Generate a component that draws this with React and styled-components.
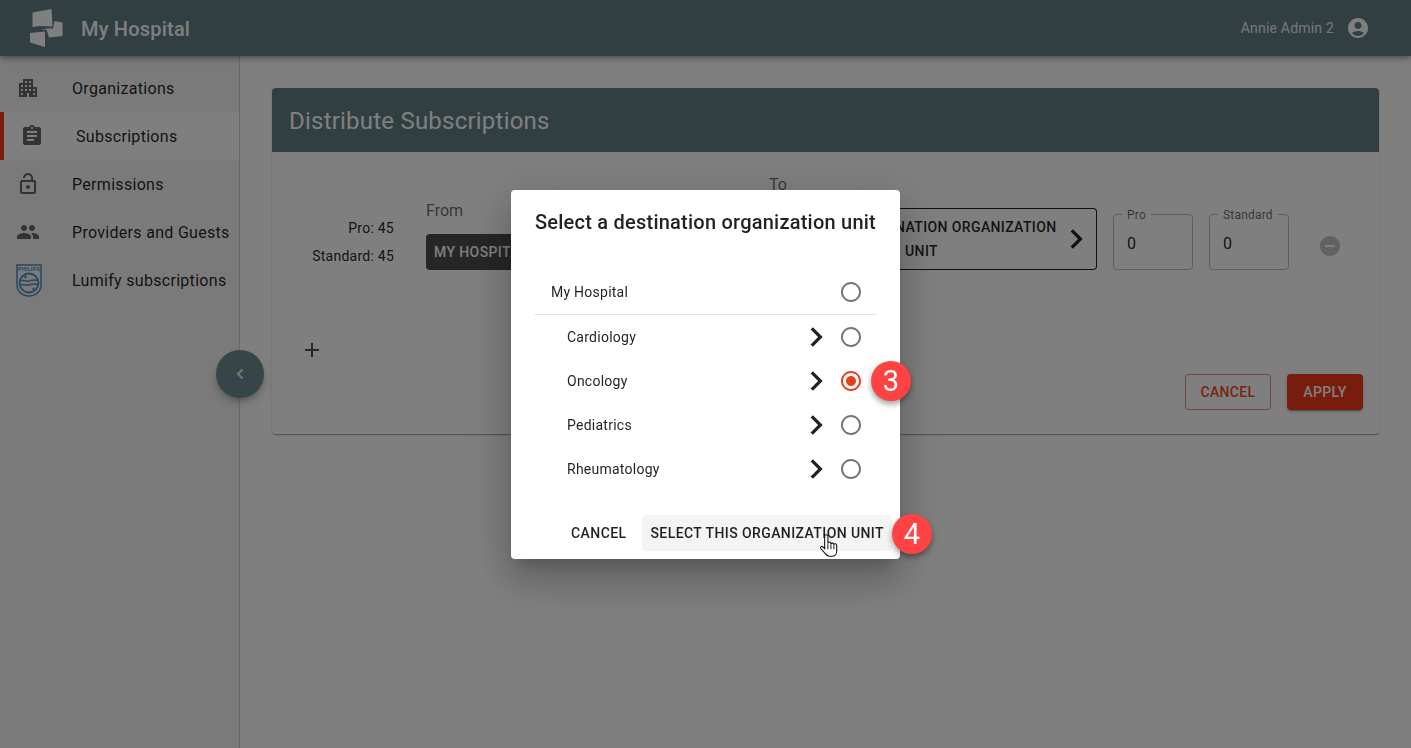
import React from 'react';
import styled, { createGlobalStyle } from 'styled-components';
import {
  MdApartment, MdAssignment, MdLockOpen, MdPeople, MdAccountCircle,
  MdRemoveCircle, MdAdd, MdRadioButtonChecked, MdRadioButtonUnchecked,
} from 'react-icons/md';

const Global = createGlobalStyle`
  html, body { margin: 0; padding: 0; height: 100%; background: #fff; }
  body { font-family: Roboto, "Liberation Sans", sans-serif; color: rgba(0,0,0,.87); overflow: hidden; }
  #root { height: 100%; }
  * { box-sizing: border-box; }
`;

const Page = styled.div`
  height: 748px;
  display: flex;
  flex-direction: column;
`;
const Header = styled.header`
  height: 56px;
  flex: none;
  background: #637d85;
  color: #fff;
  display: flex;
  align-items: center;
  padding: 0 41px 0 30px;
  box-shadow: 0 2px 4px -1px rgba(0,0,0,.2), 0 4px 5px 0 rgba(0,0,0,.14), 0 1px 10px 0 rgba(0,0,0,.12);
  position: relative;
  z-index: 2;
`;
const BrandName = styled.div`
  font-size: 20px;
  font-weight: 500;
  letter-spacing: .2px;
  margin-left: 15px;
  padding-top: 2px;
  flex: 1;
`;
const UserName = styled.div`
  font-size: 14px;
  letter-spacing: .2px;
  margin-right: 12px;
  color: rgba(255,255,255,.9);
`;
const Body = styled.div`
  flex: 1;
  display: flex;
  min-height: 0;
`;
const Sidebar = styled.nav`
  width: 240px;
  flex: none;
  background: #f5f5f5;
  border-right: 1px solid #d0d0d0;
  padding-top: 8px;
  position: relative;
`;
const NavItem = styled.div`
  height: 48px;
  display: flex;
  align-items: center;
  padding-left: 16px;
  font-size: 16px;
  letter-spacing: .3px;
  color: rgba(0,0,0,.87);
  background: ${p => (p.$active ? '#ffffff' : 'transparent')};
  border-left: ${p => (p.$active ? '4px solid #f0391a' : 'none')};
  white-space: nowrap;
`;
const NavIcon = styled.span`
  width: 56px;
  flex: none;
  display: flex;
  align-items: center;
  color: #666;
  font-size: 24px;
`;
const Collapse = styled.button`
  position: absolute;
  right: -25px;
  top: 294px;
  width: 48px;
  height: 48px;
  border-radius: 50%;
  border: 0;
  padding: 0;
  background: #6a8a90;
  display: flex;
  align-items: center;
  justify-content: center;
  box-shadow: 0 3px 5px -1px rgba(0,0,0,.2), 0 6px 10px 0 rgba(0,0,0,.14);
`;
const Main = styled.main`
  flex: 1;
  padding: 32px 32px 0;
  min-width: 0;
`;
const Card = styled.section`
  height: 346px;
  background: #fff;
  border-radius: 4px;
  box-shadow: 0 2px 1px -1px rgba(0,0,0,.2), 0 1px 1px 0 rgba(0,0,0,.14), 0 1px 3px 0 rgba(0,0,0,.12);
  display: flex;
  flex-direction: column;
  overflow: hidden;
`;
const CardHeader = styled.h2`
  margin: 0;
  height: 64px;
  flex: none;
  background: #637d85;
  color: #fff;
  font-size: 24px;
  font-weight: 400;
  letter-spacing: .22px;
  display: flex;
  align-items: center;
  padding: 2px 0 0 17px;
`;
const CardBody = styled.div`
  flex: 1;
  padding: 20px 16px 24px;
  display: flex;
  flex-direction: column;
`;
const TransferRow = styled.div`
  display: flex;
  align-items: flex-end;
  height: 98px;
`;
const Stats = styled.div`
  width: 106px;
  margin-right: 32px;
  text-align: right;
  font-size: 14px;
  letter-spacing: .25px;
  line-height: 28px;
`;
const Column = styled.div`
  display: flex;
  flex-direction: column;
  margin-right: ${p => p.$gap || 0}px;
`;
const ColumnLabel = styled.div`
  font-size: 16px;
  line-height: 24px;
  margin-bottom: 11px;
  color: rgba(0,0,0,.6);
`;
const FromButton = styled.button`
  width: 311px;
  height: 36px;
  border: 0;
  border-radius: 4px;
  background: #4c4c4c;
  color: #fff;
  font: 500 14px Roboto, sans-serif;
  letter-spacing: .4px;
  text-align: left;
  padding: 0 8px;
`;
const DestButton = styled.button`
  width: 328px;
  height: 62px;
  border: 1px solid rgba(0,0,0,.87);
  border-radius: 4px;
  background: #fff;
  color: rgba(0,0,0,.87);
  font: 500 14px/24px Roboto, sans-serif;
  letter-spacing: .38px;
  display: flex;
  align-items: center;
  padding: 0 13px 0 15px;
  gap: 12px;
`;
const DestText = styled.span`
  flex: 1;
  text-align: center;
`;
const Field = styled.div`
  position: relative;
  width: 80px;
  height: 56px;
  margin-left: 16px;
  border: 1px solid #bdbdbd;
  border-radius: 4px;
  font-size: 16px;
  padding: 17px 13px;
  line-height: 24px;
  color: rgba(0,0,0,.87);
`;
const FieldLabel = styled.span`
  position: absolute;
  left: 8px;
  top: -7px;
  background: #fff;
  padding: 0 5px;
  font-size: 12px;
  line-height: 14px;
  letter-spacing: .2px;
  color: rgba(0,0,0,.6);
`;
const RemoveIcon = styled.span`
  font-size: 24px;
  line-height: 0;
  color: #c4c4c4;
  margin-left: 29px;
  margin-bottom: 12px;
`;
const AddRow = styled.div`
  font-size: 24px;
  line-height: 0;
  margin: 68px 0 0 12px;
  color: rgba(0,0,0,.7);
`;
const CardActions = styled.div`
  display: flex;
  justify-content: flex-end;
  gap: 16px;
  margin-top: auto;
`;
const OutlineBtn = styled.button`
  width: 86px;
  height: 36px;
  border: 1px solid #f08a78;
  border-radius: 4px;
  background: #fff;
  color: #f04a2e;
  font: 500 14px Roboto, sans-serif;
  letter-spacing: .35px;
`;
const SolidBtn = styled.button`
  width: 76px;
  height: 36px;
  border: 0;
  border-radius: 4px;
  background: #f0391a;
  color: #fff;
  font: 500 14px Roboto, sans-serif;
  letter-spacing: .4px;
  box-shadow: 0 3px 1px -2px rgba(0,0,0,.2), 0 2px 2px 0 rgba(0,0,0,.14), 0 1px 5px 0 rgba(0,0,0,.12);
`;
const Overlay = styled.div`
  position: fixed;
  inset: 0;
  background: rgba(0,0,0,.5);
  z-index: 10;
  display: flex;
  align-items: center;
  justify-content: center;
`;
const Dialog = styled.div`
  position: relative;
  width: 389px;
  height: 369px;
  margin-top: 1px;
  background: #fff;
  border-radius: 4px;
  box-shadow: 0 11px 15px -7px rgba(0,0,0,.2), 0 24px 38px 3px rgba(0,0,0,.14), 0 9px 46px 8px rgba(0,0,0,.12);
  display: flex;
  flex-direction: column;
`;
const DialogTitle = styled.h3`
  margin: 0;
  padding: 16px 24px;
  font-size: 20px;
  line-height: 32px;
  font-weight: 500;
  letter-spacing: .23px;
  color: rgba(0,0,0,.87);
  white-space: nowrap;
`;
const UnitList = styled.div`
  padding: 16px 24px 0;
`;
const UnitRow = styled.div`
  height: ${p => (p.$root ? 45 : 44)}px;
  display: flex;
  align-items: center;
  padding-left: ${p => (p.$root ? 16 : 32)}px;
  padding-right: 13px;
  font-size: 14px;
  letter-spacing: .25px;
  border-bottom: ${p => (p.$root ? '1px solid #e0e0e0' : 'none')};
`;
const UnitName = styled.span`
  flex: 1;
`;
const UnitChevron = styled.span`
  display: flex;
  margin-right: 16px;
`;
const Radio = styled.span`
  font-size: 24px;
  line-height: 0;
  color: ${p => (p.$on ? '#e8401c' : '#757575')};
`;
const DialogActions = styled.div`
  margin-top: auto;
  padding: 8px;
  display: flex;
  justify-content: flex-end;
  gap: 8px;
`;
const TextBtn = styled.button`
  height: 36px;
  border: 0;
  border-radius: 4px;
  padding: 0 8px;
  background: ${p => (p.$hover ? '#f4f4f4' : 'transparent')};
  color: rgba(0,0,0,.87);
  font: 500 14px Roboto, sans-serif;
  letter-spacing: .41px;
  white-space: nowrap;
`;
const Badge = styled.span`
  position: absolute;
  left: ${p => p.$x}px;
  top: ${p => p.$y}px;
  width: 40px;
  height: 40px;
  border-radius: 50%;
  background: #ff4242;
  color: #fff;
  font-size: 29px;
  display: flex;
  align-items: center;
  justify-content: center;
  box-shadow: 0 3px 6px rgba(0,0,0,.4);
`;
const Pointer = styled.svg`
  position: absolute;
  left: 308px;
  top: 344px;
`;

const Chevron = () => (
  <svg width="13" height="20" viewBox="8.2 6 8 12" aria-hidden="true">
    <path fill="#212121" d="M10 6 8.59 7.41 13.17 12l-4.58 4.59L10 18l6-6z" />
  </svg>
);

const Logo = () => (
  <svg width="36" height="40" viewBox="31 8 36 40" fill="#fff" aria-hidden="true">
    <polygon points="33.5,12.5 52.5,9 53.5,26.5 41,26 33.5,27" />
    <polygon points="41.5,30 47.5,28.5 54,28.5 55.5,21 63.5,22.5 63.5,36 50,37.5 47.5,29.5" />
    <polygon points="30,33 46,31.5 46,47 31,42.5" />
  </svg>
);

const Shield = () => (
  <svg width="26" height="33" viewBox="0 0 26 33" aria-hidden="true">
    <path d="M1 1h24v20c0 7-6 11-12 11S1 28 1 21z" fill="none" stroke="#4d8fbd" strokeWidth="1.5" />
    <text x="13" y="7.4" textAnchor="middle" fontSize="5.4" fontWeight="700" fontFamily="Roboto" fill="#4d8fbd">PHILIPS</text>
    <circle cx="13" cy="19" r="9.5" fill="none" stroke="#4d8fbd" strokeWidth="1.8" />
    <path d="M4 17c3-2 5 1 9 0s6-2 9 0M4 21c3-2 5 1 9 0s6-2 9 0" fill="none" stroke="#4d8fbd" strokeWidth="1.5" />
    <path d="M8 13h3M9.5 11.5v3M16 25h3M17.5 23.5v3" stroke="#4d8fbd" strokeWidth="1" />
  </svg>
);

const units = ['Cardiology', 'Oncology', 'Pediatrics', 'Rheumatology'];

export default function App() {
  return (
    <>
      <Global />
      <Page>
        <Header>
          <Logo />
          <BrandName>My Hospital</BrandName>
          <UserName>Annie Admin 2</UserName>
          <MdAccountCircle size={24} />
        </Header>
        <Body>
          <Sidebar>
            <NavItem><NavIcon><MdApartment /></NavIcon>Organizations</NavItem>
            <NavItem $active><NavIcon><MdAssignment /></NavIcon>Subscriptions</NavItem>
            <NavItem><NavIcon><MdLockOpen /></NavIcon>Permissions</NavItem>
            <NavItem><NavIcon><MdPeople /></NavIcon>Providers and Guests</NavItem>
            <NavItem><NavIcon><Shield /></NavIcon>Lumify subscriptions</NavItem>
            <Collapse aria-label="Collapse">
              <svg width="10" height="12" viewBox="0 0 10 12" aria-hidden="true">
                <path d="M7.5 1.5 3 6l4.5 4.5" fill="none" stroke="#eee" strokeWidth="2" />
              </svg>
            </Collapse>
          </Sidebar>
          <Main>
            <Card>
              <CardHeader>Distribute Subscriptions</CardHeader>
              <CardBody>
                <TransferRow>
                  <Stats>Pro: 45<br />Standard: 45</Stats>
                  <Column $gap={32}>
                    <ColumnLabel>From</ColumnLabel>
                    <FromButton>MY HOSPITAL</FromButton>
                  </Column>
                  <Column>
                    <ColumnLabel>To</ColumnLabel>
                    <DestButton>
                      <DestText>SELECT A DESTINATION ORGANIZATION UNIT</DestText>
                      <Chevron />
                    </DestButton>
                  </Column>
                  <Field><FieldLabel>Pro</FieldLabel>0</Field>
                  <Field><FieldLabel>Standard</FieldLabel>0</Field>
                  <RemoveIcon><MdRemoveCircle /></RemoveIcon>
                </TransferRow>
                <AddRow><MdAdd /></AddRow>
                <CardActions>
                  <OutlineBtn>CANCEL</OutlineBtn>
                  <SolidBtn>APPLY</SolidBtn>
                </CardActions>
              </CardBody>
            </Card>
          </Main>
        </Body>
      </Page>
      <Overlay>
        <Dialog>
          <DialogTitle>Select a destination organization unit</DialogTitle>
          <UnitList>
            <UnitRow $root>
              <UnitName>My Hospital</UnitName>
              <Radio><MdRadioButtonUnchecked /></Radio>
            </UnitRow>
            {units.map(u => (
              <UnitRow key={u}>
                <UnitName>{u}</UnitName>
                <UnitChevron><Chevron /></UnitChevron>
                <Radio $on={u === 'Oncology'}>
                  {u === 'Oncology' ? <MdRadioButtonChecked /> : <MdRadioButtonUnchecked />}
                </Radio>
              </UnitRow>
            ))}
          </UnitList>
          <DialogActions>
            <TextBtn>CANCEL</TextBtn>
            <TextBtn $hover>SELECT THIS ORGANIZATION UNIT</TextBtn>
          </DialogActions>
          <Badge $x={360} $y={171}>3</Badge>
          <Badge $x={381} $y={324}>4</Badge>
          <Pointer width="20" height="26" viewBox="0 0 18 24" aria-hidden="true">
            <path d="M5 2.2a1.5 1.5 0 0 1 3 0v6.6a1.4 1.4 0 0 1 2.8 0v.6a1.4 1.4 0 0 1 2.7.2v.6a1.3 1.3 0 0 1 2.6.3v5.5c0 2.6-1.7 4.6-4.2 4.6H9.4c-1.7 0-2.6-.8-3.6-2.2L1.4 13.4c-.8-1.2.8-2.6 1.9-1.5L5 13.6z" fill="#fff" stroke="#111" strokeWidth="1" />
            <path d="M8 9v5M10.8 9.6V14M13.5 10.4V14" stroke="#111" strokeWidth=".9" fill="none" />
          </Pointer>
        </Dialog>
      </Overlay>
    </>
  );
}
